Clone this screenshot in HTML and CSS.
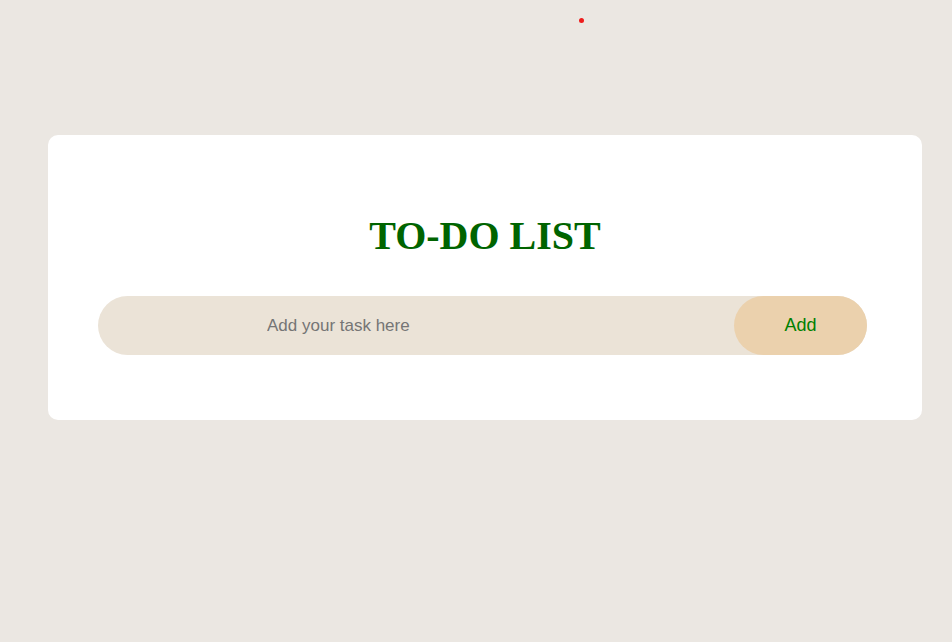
FILE: index.html
```html
<!DOCTYPE html>
<html>
<head>
<meta charset="utf-8">
<link rel="stylesheet" href="styles.css">
</head>
<body>
<span class="dot"></span>
<div class="card">
  <h2 class="title">TO-DO LIST</h2>
  <div class="row">
    <input class="task" type="text" placeholder="Add your task here">
    <button class="add">Add</button>
  </div>
</div>
</body>
</html>
```
FILE: styles.css
```css
html, body {
  margin: 0;
  padding: 0;
  background: #ebe7e2;
}
body {
  position: relative;
  width: 952px;
  height: 642px;
  padding-top: 135px;
  box-sizing: border-box;
}
.dot {
  position: absolute;
  left: 579px;
  top: 18px;
  width: 5px;
  height: 5px;
  border-radius: 50%;
  background: #ee1c1c;
}
.card {
  margin-left: 48px;
  width: 874px;
  height: 285px;
  background: #fff;
  border-radius: 10px;
  box-sizing: border-box;
  padding: 78px 55px 0 50px;
}
.title {
  margin: 0;
  text-align: center;
  font-family: "Liberation Serif", serif;
  font-weight: bold;
  font-size: 40px;
  line-height: 46px;
  color: #006400;
  margin-left: 5px;
}
.row {
  margin-top: 37px;
  display: flex;
  height: 59px;
  background: #ebe3d7;
  border-radius: 30px;
}
.task {
  flex: 1;
  border: none;
  outline: none;
  background: transparent;
  padding: 0 0 0 169px;
  font-family: "Liberation Sans", Arial, sans-serif;
  font-size: 17px;
  color: #333;
}
.task::placeholder {
  color: #757575;
}
.add {
  width: 133px;
  border: none;
  border-radius: 30px;
  background: #ebd1ad;
  font-family: "Liberation Sans", Arial, sans-serif;
  font-size: 18px;
  color: #008000;
  cursor: pointer;
  padding: 0;
}
```
